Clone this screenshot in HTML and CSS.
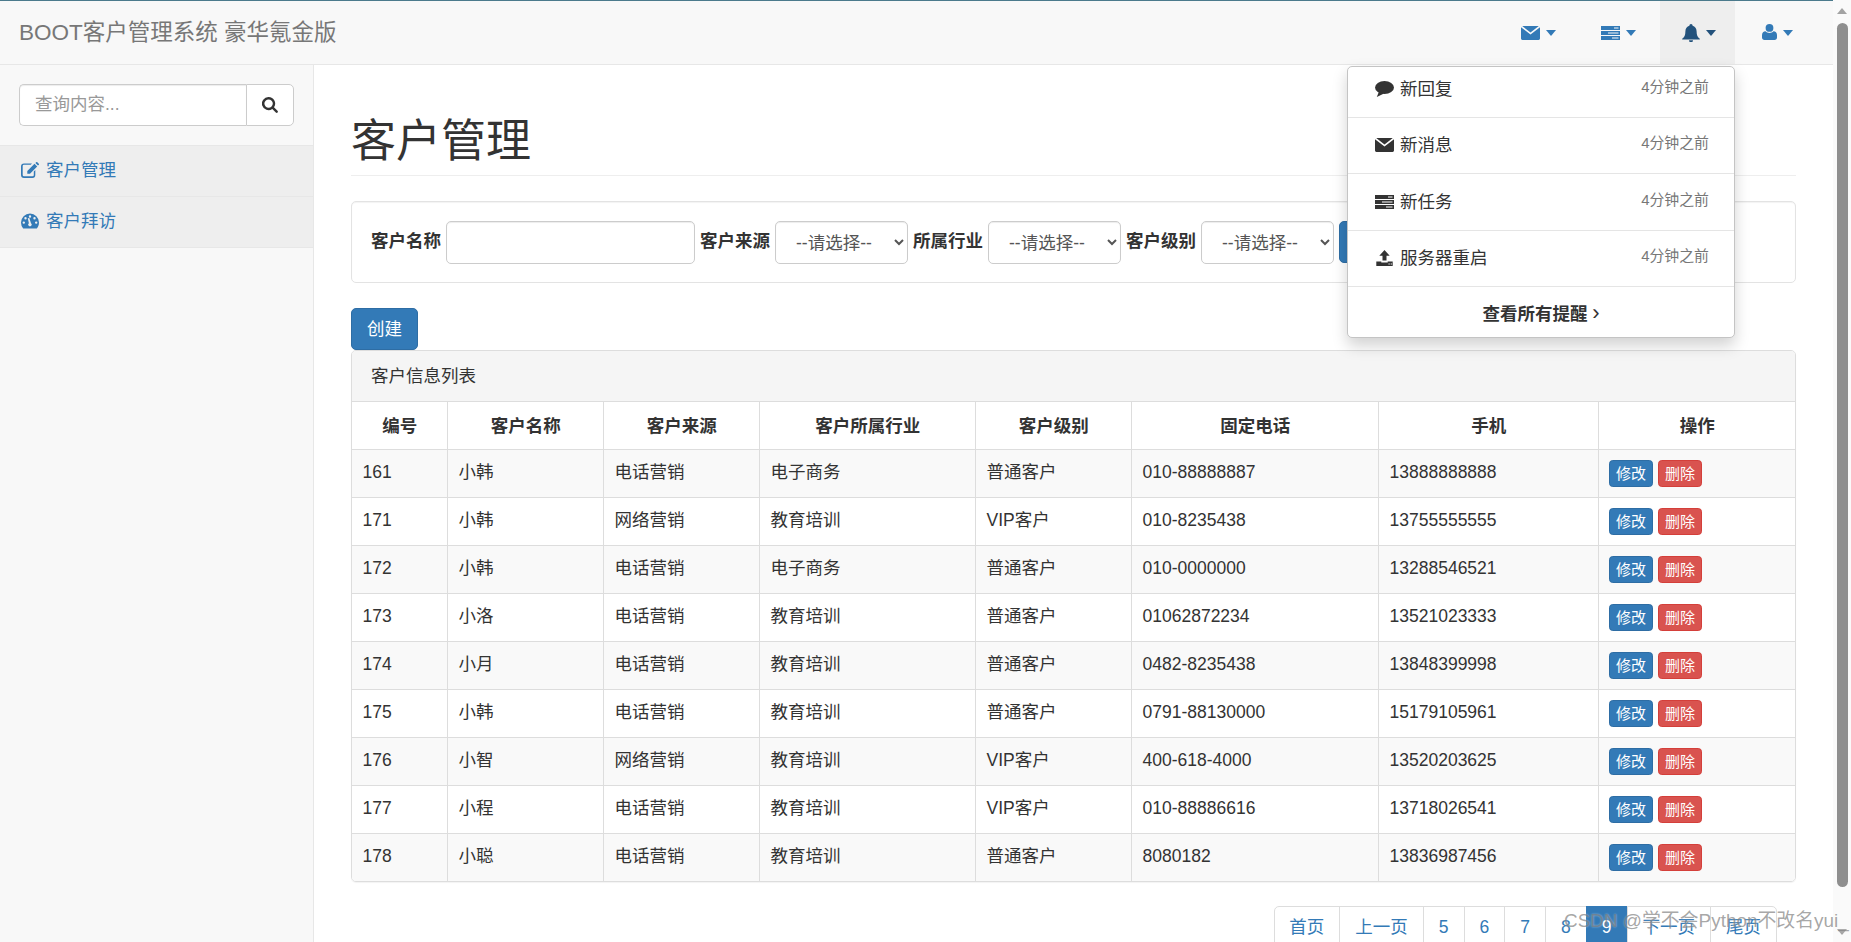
FILE: index.html
```html
<!DOCTYPE html>
<html lang="zh-CN">
<head>
<meta charset="utf-8">
<title>BOOT客户管理系统</title>
<link rel="stylesheet" href="styles.css">
</head>
<body>
<svg class="defs" aria-hidden="true">
  <symbol id="i-mail" viewBox="0 0 19 14"><path d="M1.2 0H17.8L9.5 6.4zM0 1.3 9.5 8.4 19 1.3V12.6A1.4 1.4 0 0 1 17.6 14H1.4A1.4 1.4 0 0 1 0 12.6z"/></symbol>
  <symbol id="i-tasks" viewBox="0 0 19 14"><path fill-rule="evenodd" d="M0 0H19V4H0zM13 1.4V2.6H17.5V1.4zM0 5H19V9H0zM7 6.4V7.6H17.5V6.4zM0 10H19V14H0zM11 11.4V12.6H17.5V11.4z"/></symbol>
  <symbol id="i-bell" viewBox="0 0 18 18"><path d="M9 0a1.6 1.6 0 0 1 1.6 1.7C13 2.4 14.6 4.5 14.6 7.2c0 4 1 6 3.2 7.6v.7H.2v-.7C2.400 13.200 3.400 11.200 3.400 7.200c0-2.700 1.600-4.800 4-5.500A1.600 1.600 0 0 1 9 0zM7 16.200h4a2 2 0 0 1-4 0z"/></symbol>
  <symbol id="i-user" viewBox="0 0 15 16"><circle cx="7.500" cy="3.900" r="3.900"/><path d="M0 13.500V11C0 8.800 1.500 7.300 3.500 7.300 4.500 8.300 5.900 8.900 7.500 8.900S10.500 8.300 11.500 7.300C13.500 7.300 15 8.800 15 11V13.500C15 15 14 16 12.500 16H2.500C1 16 0 15 0 13.500z"/></symbol>
  <symbol id="i-comment" viewBox="0 0 19 16"><ellipse cx="9.500" cy="6.500" rx="9.500" ry="6.500"/><path d="M4 10.500 1.800 16 9 12.500z"/></symbol>
  <symbol id="i-upload" viewBox="0 0 18 16"><path fill-rule="evenodd" d="M9 0 14.200 5.800H11V10.500H7V5.800H3.800zM.8 11.500H5.800V12.500H12.200V11.500H17.200V16H.8zM13 13.600V14.400H14.200V13.600zM15.200 13.600V14.400H16.400V13.600z"/></symbol>
  <symbol id="i-edit" viewBox="0 0 18 16"><path d="M3 1.500H11L9.700 2.800H3A1.300 1.300 0 0 0 1.700 4.100V12.900A1.300 1.300 0 0 0 3 14.200H11.500A1.300 1.300 0 0 0 12.800 12.900V9.500L14.300 8V13A3 3 0 0 1 11.500 16H3A3 3 0 0 1 0 13V4.500A3 3 0 0 1 3 1.500z"/><path d="M13.500 1.800 16.200 4.500 9 11.700H6.300V9zM14.400 1 15.200.2A.8.8 0 0 1 16.300.2L17.800 1.700A.8.8 0 0 1 17.800 2.800L17 3.600z"/></symbol>
  <symbol id="i-gauge" viewBox="0 0 18 15"><path fill-rule="evenodd" d="M9 0a9 9 0 0 1 9 9c0 2.300-.8 4.300-2.200 6H2.200A9 9 0 0 1 0 9a9 9 0 0 1 9-9zM9 1.800a1.200 1.200 0 1 0 0 2.400 1.200 1.200 0 0 0 0-2.400zM4.500 3.600a1.200 1.200 0 1 0 0 2.400 1.200 1.200 0 0 0 0-2.400zM13.500 3.600a1.200 1.200 0 1 0 0 2.400 1.200 1.200 0 0 0 0-2.400zM2.800 7.900a1.200 1.200 0 1 0 0 2.400 1.200 1.200 0 0 0 0-2.400zM15.200 7.900a1.200 1.200 0 1 0 0 2.400 1.200 1.200 0 0 0 0-2.400zM6.800 4.800 7.900 9.700A1.700 1.700 0 1 0 10 9.700L8.300 4.500z"/></symbol>
  <symbol id="i-search" viewBox="0 0 16 16"><path fill-rule="evenodd" d="M6.600 0a6.600 6.600 0 0 1 5.400 10.300l3.500 3.500a1.200 1.200 0 0 1-1.700 1.700l-3.500-3.500A6.600 6.600 0 1 1 6.600 0zM6.600 2.400a4.200 4.200 0 1 0 0 8.400 4.200 4.200 0 0 0 0-8.400z"/></symbol>
</svg>

<div class="page">
  <div class="viewport">
    <header class="navbar">
      <a class="brand">BOOT客户管理系统 豪华氪金版</a>
      <ul class="toplinks">
        <li class="toplink"><svg class="ic ic-19x14"><use href="#i-mail"/></svg><span class="caret"></span></li>
        <li class="toplink"><svg class="ic ic-19x14"><use href="#i-tasks"/></svg><span class="caret"></span></li>
        <li class="toplink is-open"><svg class="ic ic-bell"><use href="#i-bell"/></svg><span class="caret"></span></li>
        <li class="toplink"><svg class="ic ic-user"><use href="#i-user"/></svg><span class="caret"></span></li>
      </ul>
      <ul class="dropdown">
        <li class="dd-row dd-first"><span class="dd-title"><svg class="ic ic-19x16"><use href="#i-comment"/></svg>新回复</span><span class="dd-time">4分钟之前</span></li>
        <li class="dd-row"><span class="dd-title"><svg class="ic ic-19x14"><use href="#i-mail"/></svg>新消息</span><span class="dd-time">4分钟之前</span></li>
        <li class="dd-row"><span class="dd-title"><svg class="ic ic-19x14"><use href="#i-tasks"/></svg>新任务</span><span class="dd-time">4分钟之前</span></li>
        <li class="dd-row"><span class="dd-title"><svg class="ic ic-19x16"><use href="#i-upload"/></svg>服务器重启</span><span class="dd-time">4分钟之前</span></li>
        <li class="dd-foot">查看所有提醒 <span class="dd-chev">›</span></li>
      </ul>
    </header>

    <div class="body-row">
      <aside class="sidebar">
        <div class="side-search">
          <input class="side-input" type="text" placeholder="查询内容...">
          <button class="side-btn"><svg class="ic ic-search"><use href="#i-search"/></svg></button>
        </div>
        <ul class="side-menu">
          <li class="side-item"><svg class="ic ic-edit"><use href="#i-edit"/></svg>客户管理</li>
          <li class="side-item"><svg class="ic ic-edit"><use href="#i-gauge"/></svg>客户拜访</li>
        </ul>
      </aside>

      <main class="main">
        <h1 class="page-title">客户管理</h1>
        <form class="filter">
          <label class="f-label">客户名称</label>
          <input class="f-input" type="text">
          <label class="f-label">客户来源</label>
          <select class="f-select"><option>--请选择--</option></select>
          <label class="f-label">所属行业</label>
          <select class="f-select"><option>--请选择--</option></select>
          <label class="f-label">客户级别</label>
          <select class="f-select"><option>--请选择--</option></select>
          <button class="btn-primary" type="button">筛选</button>
        </form>

        <button class="btn-primary btn-create" type="button">创建</button>

        <section class="panel">
          <div class="panel-head">客户信息列表</div>
          <table class="grid">
            <colgroup>
              <col class="c1"><col class="c2"><col class="c3"><col class="c4"><col class="c5"><col class="c6"><col class="c7"><col class="c8">
            </colgroup>
            <thead>
              <tr><th>编号</th><th>客户名称</th><th>客户来源</th><th>客户所属行业</th><th>客户级别</th><th>固定电话</th><th>手机</th><th>操作</th></tr>
            </thead>
            <tbody>
              <tr><td>161</td><td>小韩</td><td>电话营销</td><td>电子商务</td><td>普通客户</td><td>010-88888887</td><td>13888888888</td><td class="ops"><a class="xs blue">修改</a><a class="xs red">删除</a></td></tr>
              <tr><td>171</td><td>小韩</td><td>网络营销</td><td>教育培训</td><td>VIP客户</td><td>010-8235438</td><td>13755555555</td><td class="ops"><a class="xs blue">修改</a><a class="xs red">删除</a></td></tr>
              <tr><td>172</td><td>小韩</td><td>电话营销</td><td>电子商务</td><td>普通客户</td><td>010-0000000</td><td>13288546521</td><td class="ops"><a class="xs blue">修改</a><a class="xs red">删除</a></td></tr>
              <tr><td>173</td><td>小洛</td><td>电话营销</td><td>教育培训</td><td>普通客户</td><td>01062872234</td><td>13521023333</td><td class="ops"><a class="xs blue">修改</a><a class="xs red">删除</a></td></tr>
              <tr><td>174</td><td>小月</td><td>电话营销</td><td>教育培训</td><td>普通客户</td><td>0482-8235438</td><td>13848399998</td><td class="ops"><a class="xs blue">修改</a><a class="xs red">删除</a></td></tr>
              <tr><td>175</td><td>小韩</td><td>电话营销</td><td>教育培训</td><td>普通客户</td><td>0791-88130000</td><td>15179105961</td><td class="ops"><a class="xs blue">修改</a><a class="xs red">删除</a></td></tr>
              <tr><td>176</td><td>小智</td><td>网络营销</td><td>教育培训</td><td>VIP客户</td><td>400-618-4000</td><td>13520203625</td><td class="ops"><a class="xs blue">修改</a><a class="xs red">删除</a></td></tr>
              <tr><td>177</td><td>小程</td><td>电话营销</td><td>教育培训</td><td>VIP客户</td><td>010-88886616</td><td>13718026541</td><td class="ops"><a class="xs blue">修改</a><a class="xs red">删除</a></td></tr>
              <tr><td>178</td><td>小聪</td><td>电话营销</td><td>教育培训</td><td>普通客户</td><td>8080182</td><td>13836987456</td><td class="ops"><a class="xs blue">修改</a><a class="xs red">删除</a></td></tr>
            </tbody>
          </table>
        </section>

        <ul class="pager">
          <li class="pg">首页</li><li class="pg">上一页</li><li class="pg">5</li><li class="pg">6</li><li class="pg">7</li><li class="pg">8</li><li class="pg pg-on">9</li><li class="pg">下一页</li><li class="pg">尾页</li>
        </ul>
      </main>
    </div>
  </div>

  <div class="scrollbar">
    <span class="sb-up"></span>
    <span class="sb-thumb"></span>
    <span class="sb-down"></span>
  </div>

  <div class="watermark">CSDN @学不会Python不改名yui_</div>
</div>
</body>
</html>
```
FILE: styles.css
```css
* { box-sizing: border-box; }
html, body { margin: 0; padding: 0; height: 100%; overflow: hidden; background: #fff; }
body {
  font-family: "Liberation Sans", "Noto Sans CJK SC", sans-serif;
  font-size: 17.5px;
  line-height: 25px;
  color: #333;
}
ul { list-style: none; margin: 0; padding: 0; }
.defs { position: absolute; width: 0; height: 0; }
.ic { display: block; fill: currentColor; flex: none; }
.ic-19x14 { width: 19px; height: 14px; }
.ic-19x16 { width: 19px; height: 16px; }
.ic-bell { width: 18px; height: 18px; }
.ic-user { width: 15px; height: 16px; }
.ic-search { width: 16px; height: 16px; }
.ic-edit { width: 18px; height: 16px; }

.page { position: relative; display: flex; width: 1851px; height: 942px; overflow: hidden; }
.viewport { flex: 1; min-width: 0; display: flex; flex-direction: column; }

/* top bar */
.navbar {
  position: relative;
  flex: none;
  height: 65px;
  display: flex;
  align-items: stretch;
  justify-content: space-between;
  background: #f8f8f8;
  border-top: 1px solid #4b7a8c;
  border-bottom: 1px solid #e7e7e7;
}
.brand { align-self: center; margin-left: 19px; font-size: 22.5px; line-height: 30px; color: #777; }
.toplinks { display: flex; gap: 5.3px; padding-right: 18px; }
.toplink {
  width: 75px;
  padding-left: 22px;
  display: flex;
  align-items: center;
  gap: 6px;
  color: #337ab7;
}
.toplink.is-open { background: #eee; color: #23527c; }
.toplink .ic-user { margin-top: -1px; }
.caret { width: 0; height: 0; border-top: 6.5px solid currentColor; border-left: 5.5px solid transparent; border-right: 5.5px solid transparent; }

/* notifications dropdown */
.dropdown {
  position: absolute;
  top: 65px;
  left: 1347px;
  width: 388px;
  z-index: 5;
  background: #fff;
  border: 1px solid #c4c4c4;
  border-radius: 5px;
  box-shadow: 0 7.500px 15px rgba(0, 0, 0, .175);
}
.dd-row {
  height: 56.500px;
  padding: 14.500px 25px 0 27px;
  display: flex;
  justify-content: space-between;
  border-bottom: 1px solid #e5e5e5;
}
.dd-first { height: 50.500px; padding-top: 8.500px; }
.dd-title { display: flex; align-items: center; gap: 6px; height: 26px; line-height: 26px; }
.dd-time { margin-top: -1px; font-size: 14.900px; line-height: 24px; color: #777; }
.dd-foot { height: 50px; padding-top: 14px; line-height: 26px; text-align: center; font-weight: 700; }
.dd-chev { font-size: 22px; font-weight: 400; line-height: 20px; }

/* sidebar + content */
.body-row { flex: 1; min-height: 0; display: flex; }
.sidebar { flex: none; width: 314px; background: #f8f8f8; border-right: 1px solid #e7e7e7; }
.side-search { display: flex; padding: 19px; height: 80px; }
.side-input {
  width: 227px;
  height: 42px;
  padding: 0 15px 2px;
  font: inherit;
  color: #555;
  background: #fff;
  border: 1px solid #ccc;
  border-right: 0;
  border-radius: 5px 0 0 5px;
  box-shadow: inset 0 1px 1px rgba(0, 0, 0, .075);
}
.side-input::placeholder { color: #999; }
.side-btn {
  flex: none;
  width: 48px;
  height: 42px;
  padding: 0;
  display: flex;
  align-items: center;
  justify-content: center;
  color: #333;
  background: #fff;
  border: 1px solid #ccc;
  border-radius: 0 5px 5px 0;
}
.side-menu { border-top: 1px solid #e7e7e7; }
.side-item {
  height: 51px;
  padding: 0 0 2px 21px;
  display: flex;
  align-items: center;
  gap: 7px;
  color: #337ab7;
  background: #eee;
  border-bottom: 1px solid #e7e7e7;
}

.main { flex: 1; min-width: 0; padding: 0 37px; }
.page-title {
  margin: 51.500px 0 25px;
  padding-bottom: 9px;
  font-size: 45px;
  font-weight: 400;
  line-height: 49.500px;
  border-bottom: 1px solid #eee;
}
.filter {
  display: flex;
  align-items: flex-start;
  gap: 5px;
  height: 82px;
  padding: 19px 19px 0;
  background: #fff;
  border: 1px solid #e3e3e3;
  border-radius: 5px;
  box-shadow: inset 0 1px 1px rgba(0, 0, 0, .05);
}
.f-label { width: 70px; padding-top: 8px; font-weight: 700; white-space: nowrap; }
.f-input, .f-select {
  height: 43px;
  font: inherit;
  color: #555;
  background: #fff;
  border: 1px solid #ccc;
  border-radius: 5px;
  box-shadow: inset 0 1px 1px rgba(0, 0, 0, .075);
}
.f-input { width: 249px; padding: 0 15px; }
.f-select { width: 133px; padding: 0 16px; }
.btn-primary {
  flex: none;
  height: 42px;
  width: 67px;
  padding: 0;
  font: inherit;
  color: #fff;
  background: #337ab7;
  border: 1px solid #2e6da4;
  border-radius: 5px;
}
.btn-create { display: block; margin-top: 25px; }

.panel { border: 1px solid #ddd; border-radius: 5px; overflow: hidden; box-shadow: 0 1px 1px rgba(0, 0, 0, .05); }
.panel-head { height: 51px; padding: 13px 19px 0; background: #f5f5f5; border-bottom: 1px solid #ddd; }
.grid { width: 100%; table-layout: fixed; border-collapse: separate; border-spacing: 0; }
.c1 { width: 96px; }
.c2 { width: 156px; }
.c3 { width: 156px; }
.c4 { width: 216px; }
.c5 { width: 156px; }
.c6 { width: 247px; }
.c7 { width: 220px; }
.c8 { width: 196px; }
.grid th, .grid td {
  height: 48px;
  padding: 0 10px 0 10.500px;
  border-right: 1px solid #ddd;
  border-bottom: 1px solid #ddd;
  vertical-align: middle;
  text-align: left;
  font-weight: 400;
}
.grid th { padding-top: 1px; text-align: center; font-weight: 700; }
.grid td { padding-bottom: 3px; }
.grid td.ops { padding: 0 0 0 10px; }
.grid th:last-child, .grid td:last-child { border-right: 0; }
.grid tbody tr:last-child td { height: 47px; border-bottom: 0; }
.grid tbody tr:nth-child(odd) { background: #f9f9f9; }
.xs {
  display: inline-block;
  height: 27px;
  padding: 0 6px;
  font-size: 15px;
  line-height: 25px;
  color: #fff;
  border: 1px solid;
  border-radius: 3.750px;
  vertical-align: middle;
}
.blue { background: #337ab7; border-color: #2e6da4; }
.red { margin-left: 5px; background: #d9534f; border-color: #d43f3a; }

.pager { display: flex; justify-content: flex-end; margin-top: 24px; padding-right: 19px; }
.pg {
  flex: none;
  height: 40px;
  margin-left: -1px;
  padding: 7.500px 15px;
  color: #337ab7;
  background: #fff;
  border: 1px solid #ddd;
}
.pg:first-child { margin-left: 0; padding-left: 14px; border-top-left-radius: 5px; }
.pg:last-child { border-top-right-radius: 5px; }
.pg-on { color: #fff; background: #337ab7; border-color: #337ab7; }

/* browser scrollbar */
.scrollbar {
  position: relative;
  flex: none;
  width: 18px;
  display: flex;
  flex-direction: column;
  align-items: center;
  background: #fafafa;
}
.sb-up { margin-top: 8px; width: 0; height: 0; border-bottom: 6px solid #a3a3a3; border-left: 5.500px solid transparent; border-right: 5.500px solid transparent; }
.sb-thumb { margin-top: 9px; width: 11px; height: 864px; background: #8f8f8f; border-radius: 5.500px; }
.sb-down { margin-top: 42px; width: 0; height: 0; border-top: 6px solid #a3a3a3; border-left: 5.500px solid transparent; border-right: 5.500px solid transparent; }

.watermark {
  position: absolute;
  top: 908px;
  left: 1564px;
  font-size: 18.900px;
  line-height: 26px;
  white-space: nowrap;
  color: rgba(110, 110, 110, .62);
  text-shadow: 0 0 2px rgba(255, 255, 255, .5);
  z-index: 6;
}
```
